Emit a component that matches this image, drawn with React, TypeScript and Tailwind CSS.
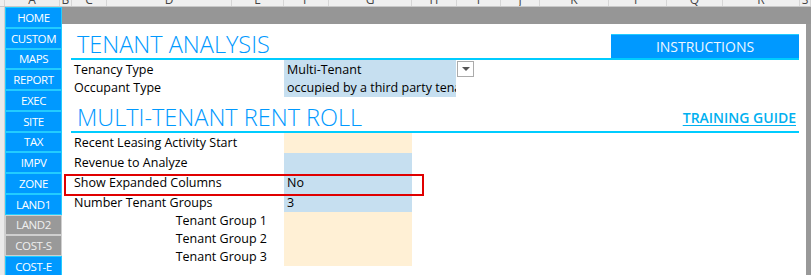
import React from "react";

const cols = [
  { name: "", w: 5 },
  { name: "A", w: 55 },
  { name: "B", w: 12 },
  { name: "C", w: 35 },
  { name: "D", w: 125 },
  { name: "E", w: 52 },
  { name: "F", w: 45 },
  { name: "G", w: 83 },
  { name: "H", w: 45 },
  { name: "I", w: 44 },
  { name: "J", w: 39 },
  { name: "K", w: 69 },
  { name: "P", w: 58 },
  { name: "Q", w: 56 },
  { name: "R", w: 77 },
  { name: "S", w: 11 },
];

const navButtons = [
  { name: "HOME", off: false },
  { name: "CUSTOM", off: false },
  { name: "MAPS", off: false },
  { name: "REPORT", off: false },
  { name: "EXEC", off: false },
  { name: "SITE", off: false },
  { name: "TAX", off: false },
  { name: "IMPV", off: false },
  { name: "ZONE", off: false },
  { name: "LAND1", off: false },
  { name: "LAND2", off: true },
  { name: "COST-S", off: true },
  { name: "COST-E", off: false },
];

const groups = ["Tenant Group 1", "Tenant Group 2", "Tenant Group 3"];

const font = { fontFamily: '"Open Sans", "Noto Sans", sans-serif' };

export default function App() {
  return (
    <div className="w-[811px] h-[275px] overflow-hidden bg-white text-black" style={font}>
      {/* column header strip, scrolled so only the bottom of the letters shows */}
      <div className="flex h-[7px] overflow-hidden bg-[#efefef] border-b border-[#c8c8c8]">
        {cols.map((c, i) => (
          <div
            key={i}
            className="shrink-0 h-full border-r border-[#d6d6d6] flex justify-center"
            style={{ width: c.w }}
          >
            <span className="text-[12px] leading-[12px] -mt-[6px] text-[#444]">{c.name}</span>
          </div>
        ))}
      </div>

      <div className="flex h-[268px]">
        {/* row headers (cut off) */}
        <div className="w-[5px] shrink-0 bg-[#eaeaea] border-r border-[#d0d0d0]" />

        {/* macro buttons */}
        <div className="w-[57px] shrink-0 flex flex-col">
          {navButtons.map((b) => (
            <div
              key={b.name}
              className={
                b.off
                  ? "h-[20.75px] shrink-0 flex items-center justify-center border border-[#cfcfcf] bg-[#999999] text-[11.5px] tracking-[-0.4px] text-[#f0f0f0]"
                  : "h-[20.75px] shrink-0 flex items-center justify-center border border-[#22ccff] bg-[#0099ff] text-[11.5px] tracking-[-0.4px] text-white"
              }
            >
              {b.name}
            </div>
          ))}
        </div>

        <div className="flex-1 flex flex-col">
          <div className="h-[17px] bg-[#969696]" />
          <div className="flex flex-1">
            <div className="w-[744px] bg-white pl-[9px] pr-[7px] relative">
              {/* TENANT ANALYSIS */}
              <div className="h-[36px] flex items-end justify-between border-b-2 border-[#00ccff]">
                <span className="text-[23.5px] font-light leading-[28px] text-[#0099ff] pl-[6px]">
                  TENANT ANALYSIS
                </span>
                <div className="w-[188px] h-[24px] bg-[#0099ff] border-t border-[#22ccff] flex items-center justify-center text-[14px] text-[#eef7ff]">
                  INSTRUCTIONS
                </div>
              </div>
              <div className="flex">
                <div className="w-[213px] text-[12.5px] pl-[3px]">
                  <div className="h-[19px] leading-[19px]">Tenancy Type</div>
                  <div className="h-[18px] leading-[18px]">Occupant Type</div>
                </div>
                <div className="w-[172px] bg-[#c6dff0] text-[12.5px] pl-[3px] overflow-hidden whitespace-nowrap">
                  <div className="h-[19px] leading-[19px]">Multi-Tenant</div>
                  <div className="h-[18px] leading-[18px]">occupied by a third party tenant</div>
                </div>
                <div className="ml-[1px] mt-[1px] w-[17px] h-[16px] border border-[#ababab] bg-white flex items-center justify-center">
                  <svg width="8" height="5" viewBox="0 0 8 5">
                    <path d="M0 0 H8 L4 4 Z" fill="#555" />
                  </svg>
                </div>
              </div>

              {/* MULTI-TENANT RENT ROLL */}
              <div className="h-[36px] flex items-end justify-between border-b-2 border-[#00ccff]">
                <span className="text-[23.5px] font-light leading-[28px] text-[#0099ff] pl-[6px]">
                  MULTI-TENANT RENT ROLL
                </span>
                <span className="text-[14px] font-semibold text-[#00b0f0] underline underline-offset-2 leading-[20px] mb-[3px] pr-[3px]">
                  TRAINING GUIDE
                </span>
              </div>
              <div className="flex text-[12.5px]">
                <div className="w-[213px] pl-[3px]">
                  <div className="h-[20px] leading-[20px]">Recent Leasing Activity Start</div>
                  <div className="h-[20px] leading-[20px]">Revenue to Analyze</div>
                  <div className="h-[20px] leading-[20px]">Show Expanded Columns</div>
                  <div className="h-[19px] leading-[19px]">Number Tenant Groups</div>
                  {groups.map((g) => (
                    <div key={g} className="h-[18px] leading-[18px] text-right pr-[17px]">
                      {g}
                    </div>
                  ))}
                </div>
                <div className="w-[128px]">
                  <div className="h-[20px] bg-[#fff0d5]" />
                  <div className="h-[20px] bg-[#c6dff0]" />
                  <div className="h-[20px] leading-[20px] pl-[3px] bg-[#c6dff0]">No</div>
                  <div className="h-[19px] leading-[19px] pl-[3px] bg-[#c6dff0]">3</div>
                  <div className="h-[54px] bg-[#fff0d5]" />
                </div>
              </div>

              {/* highlight box */}
              <div className="absolute left-[2px] top-[150px] w-[360px] h-[22px] border-2 border-[#e00000]" />
            </div>
            <div className="flex-1 bg-[#999999]" />
          </div>
        </div>
      </div>
    </div>
  );
}
